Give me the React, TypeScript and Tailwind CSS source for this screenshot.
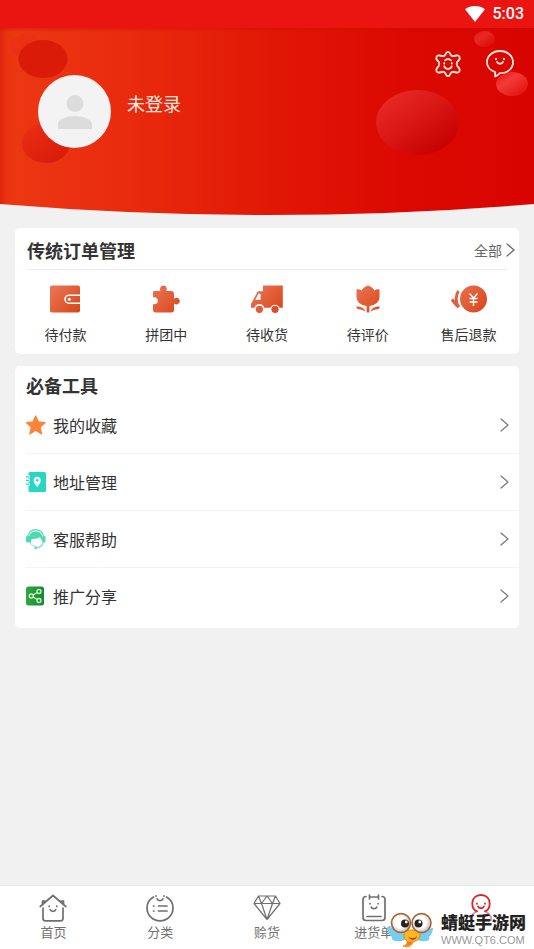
import type { ReactNode } from "react"

const stroke = {
  fill: "none",
  stroke: "currentColor",
  strokeLinecap: "round" as const,
  strokeLinejoin: "round" as const,
}

function ChevronIcon() {
  return (
    <svg width="9" height="14" viewBox="0 0 9 14" {...stroke} strokeWidth="1.2" aria-hidden="true">
      <path d="M1 1l7 6-7 6" />
    </svg>
  )
}

function GearIcon() {
  return (
    <svg width="28" height="28" viewBox="0 0 28 28" {...stroke} strokeWidth="1.8" aria-hidden="true">
      <path d="M14 1.800c1.300 0 1.800.8 2.200 2 .5 1.700 2 2.600 3.800 2.200l2.500-.5c1.600-.3 2.400.2 3 1.400.6 1.200.4 2.100-.6 3.100-1.700 1.700-2.200 2.600-2.200 4s.5 2.300 2.200 4c1 1 1.200 1.900.6 3.100-.6 1.200-1.400 1.700-3 1.400l-2.500-.5c-1.800-.4-3.300.5-3.800 2.200-.4 1.200-.9 2-2.200 2s-1.800-.8-2.200-2c-.5-1.700-2-2.600-3.800-2.200l-2.500.5c-1.600.3-2.400-.2-3-1.400-.6-1.200-.4-2.100.6-3.100 1.700-1.700 2.200-2.600 2.200-4s-.5-2.300-2.200-4c-1-1-1.200-1.900-.6-3.100.6-1.200 1.400-1.700 3-1.400l2.500.5c1.800.4 3.300-.5 3.800-2.200.4-1.200.9-2 2.200-2z" />
      <path d="M11 10.300c1.800-1.600 4.200-1.600 6 0M10.200 16.300c1.300 3.600 6.300 3.600 7.600 0" />
      <path d="M10.200 13.200v.2M17.800 13.200v.2" strokeWidth="2" />
    </svg>
  )
}

function MessageIcon() {
  return (
    <svg width="28" height="28" viewBox="0 0 28 28" {...stroke} strokeWidth="1.8" aria-hidden="true">
      <path d="M9.200 22.200v4.300c2.200-.8 3.400-2 4.600-3.300C21.500 23.300 27 18.600 27 12.300 27 5.900 21.300 1 14 1S1 5.900 1 12.300c0 4.300 3.200 8.300 8.200 9.900z" />
      <path d="M11 11.800c.8 2.600 5.200 2.600 6 0" />
      <path d="M10 8.800v.4M18 8.800v.4" strokeWidth="2" />
    </svg>
  )
}

function WifiIcon() {
  return (
    <svg width="20" height="16" viewBox="0 0 20 16" fill="currentColor" aria-hidden="true">
      <path d="M0 3.200C6-1 14-1 20 3.200L10 16z" />
    </svg>
  )
}

function BannerBackdrop() {
  return (
    <svg
      className="absolute inset-0 h-full w-full"
      viewBox="0 0 534 188"
      preserveAspectRatio="none"
      aria-hidden="true"
    >
      <defs>
        <linearGradient id="banner">
          <stop offset="0" stopColor="#e93011" />
          <stop offset="0.03" stopColor="#ec3712" />
          <stop offset="0.25" stopColor="#e92a0e" />
          <stop offset="0.5" stopColor="#e11806" />
          <stop offset="0.75" stopColor="#dc0902" />
          <stop offset="1" stopColor="#d80400" />
        </linearGradient>
        <linearGradient id="bigBall" x1="0.1" y1="0.1" x2="0.85" y2="0.9">
          <stop offset="0" stopColor="#e82a26" />
          <stop offset="0.45" stopColor="#da1816" />
          <stop offset="1" stopColor="#c60000" />
        </linearGradient>
        <linearGradient id="lightBall" x1="0" y1="0" x2="0.9" y2="1">
          <stop offset="0" stopColor="#e41414" />
          <stop offset="0.4" stopColor="#f33a38" />
          <stop offset="1" stopColor="#e01008" />
        </linearGradient>
        <linearGradient id="smallBall" x1="0" y1="0" x2="0.9" y2="1">
          <stop offset="0" stopColor="#e41a16" />
          <stop offset="0.4" stopColor="#e82824" />
          <stop offset="1" stopColor="#da0802" />
        </linearGradient>
        <linearGradient id="lowBall" x1="0" y1="0" x2="0.7" y2="1">
          <stop offset="0" stopColor="#ec3014" />
          <stop offset="1" stopColor="#d91c0a" />
        </linearGradient>
        <linearGradient id="topEdge" x2="0" y2="1">
          <stop offset="0" stopColor="#c80c00" stopOpacity="0.4" />
          <stop offset="1" stopColor="#c80c00" stopOpacity="0" />
        </linearGradient>
        <linearGradient id="leftEdge">
          <stop offset="0" stopColor="#d01400" stopOpacity="0.4" />
          <stop offset="1" stopColor="#d01400" stopOpacity="0" />
        </linearGradient>
      </defs>
      <path d="M0 0H534V176Q267 198 0 176z" fill="url(#banner)" />
      <rect width="534" height="4" fill="url(#topEdge)" />
      <rect width="6" height="176" fill="url(#leftEdge)" />
      <ellipse cx="26" cy="18" rx="15" ry="12" fill="#ec2c18" opacity="0.6" />
      <ellipse cx="43" cy="31" rx="24.500" ry="19" fill="#d91b08" />
      <ellipse cx="46" cy="115" rx="24" ry="20" fill="url(#lowBall)" />
      <ellipse cx="417.500" cy="94.500" rx="41.500" ry="32.500" fill="url(#bigBall)" />
      <ellipse cx="484.500" cy="11" rx="10.500" ry="8" fill="url(#smallBall)" />
      <ellipse cx="512" cy="56" rx="16" ry="12" fill="url(#lightBall)" />
    </svg>
  )
}

function OrderSvg({ id, width = 32, children }: { id: string; width?: number; children: ReactNode }) {
  return (
    <svg width={width} height="30" viewBox={`0 0 ${width} 30`} fill={`url(#${id})`} aria-hidden="true">
      <defs>
        <linearGradient id={id} x1="0" y1="0" x2={width} y2="30" gradientUnits="userSpaceOnUse">
          <stop offset="0.1" stopColor="#ea7454" />
          <stop offset="0.9" stopColor="#d9491c" />
        </linearGradient>
      </defs>
      {children}
    </svg>
  )
}

const orders = [
  {
    label: "待付款",
    icon: (
      <OrderSvg id="wallet">
        <rect x="1" y="1.500" width="30" height="27" rx="2" />
        <path d="M32 11.200H20a4 4 0 000 8h12" fill="none" stroke="#fff" strokeWidth="1.500" />
        <circle cx="20.300" cy="15.200" r="1.500" fill="#fff" />
      </OrderSvg>
    ),
  },
  {
    label: "拼团中",
    icon: (
      <OrderSvg id="puzzle">
        <path d="M4 7h6.500c-.8-1.200-.7-2.200-.2-3.200C11 2.300 12.200 1.500 13.500 1.500s2.500.8 3 2.300c.4 1 .3 2-.2 3.200H21c1.800 0 3 1 3 2.800v5c1-.8 1.800-1 2.600-1 1.800 0 3.200 1.400 3.200 3.200s-1.400 3.400-3.200 3.400c-.8 0-1.600-.2-2.600-1v6.600c0 1.600-.9 2.500-2.500 2.500h-16c-1.600 0-2.500-.9-2.500-2.500v-5.700c2.800.4 5-1 5-3.500s-2.200-4-5-3.600V9c0-1.200.6-2 1-2z" />
      </OrderSvg>
    ),
  },
  {
    label: "待收货",
    icon: (
      <OrderSvg id="truck">
        <path d="M12 1.500h19.800v22.200h-3.200a5 5 0 00-9.200 0h-6.200a5 5 0 00-9.600 0H0v-4l2.200-3.600L6 8.500c.4-.8 1-1.200 2-1.200h4z" />
        <path d="M4.300 15.800L7.300 9.700h2.400v6.100z" fill="#fff" />
        <circle cx="8.400" cy="25.300" r="3.600" />
        <circle cx="24" cy="25.300" r="3.600" />
      </OrderSvg>
    ),
  },
  {
    label: "待评价",
    icon: (
      <OrderSvg id="tulip">
        <path d="M4.500 5.600c1.200-.6 3.200-.4 5.200 1 .8-2 2.800-4.200 6.300-5.100 3.500.9 5.500 3.100 6.300 5.100 2-1.400 4-1.600 5.200-1v7.200c0 5-4 8.700-10.100 9.100v6.600h-2.800v-6.600c-6.100-.4-10.100-4.100-10.100-9.100z" />
        <path d="M4.300 22.400c5.200 0 8.200 1.600 9 5.400-1.400-1.800-4.200-2.400-6.800-2.600-1.400 0-2.200-1.400-2.200-2.800zM27.700 22.400c-5.200 0-8.200 1.600-9 5.400 1.400-1.800 4.200-2.400 6.800-2.600 1.400 0 2.200-1.400 2.200-2.800z" />
      </OrderSvg>
    ),
  },
  {
    label: "售后退款",
    icon: (
      <OrderSvg id="refund" width={38}>
        <circle cx="23.500" cy="15" r="13.500" />
        <path
          d="M19.500 9.500l4 4.500 4-4.500M23.500 14v8M19.500 14.500h8M19.500 18h8"
          fill="none"
          stroke="#fff"
          strokeWidth="1.400"
        />
        <path
          d="M8.500 7c-3.200 4.500-3.200 12 .4 16.200M1.800 15.500c1.600 1.400 2.800 3.700 6.400 7.300"
          fill="none"
          stroke="#de6040"
          strokeWidth="3"
        />
      </OrderSvg>
    ),
  },
]

const tools = [
  {
    label: "我的收藏",
    icon: (
      <svg width="20" height="20" viewBox="0 0 20 20" fill="#fc8338" aria-hidden="true">
        <path
          d="M9.700.9l2.700 6 6.700.6-5 4.500 1.500 6.900-5.900-3.600-5.900 3.600L5.300 12 .3 7.500 7 6.900z"
          stroke="#fc8338"
          strokeWidth="1.200"
          strokeLinejoin="round"
        />
      </svg>
    ),
  },
  {
    label: "地址管理",
    icon: (
      <svg width="20" height="20" viewBox="0 0 20 20" aria-hidden="true">
        <rect x="2.500" y="0" width="17.500" height="20" rx="1.500" fill="#28d7c3" />
        <path d="M0 4.800h4M0 8.300h4M0 12.200h4" stroke="#fff" strokeWidth="2.600" />
        <path d="M0 4.800h3.200M0 8.300h3.200M0 12.200h3.200" stroke="#28d7c3" strokeWidth="1.300" />
        <path d="M11.200 4.800c-2 0-3.500 1.500-3.500 3.500 0 2.600 2 4.800 3.500 7 1.500-2.200 3.500-4.400 3.500-7 0-2-1.500-3.500-3.500-3.500z" fill="#fff" />
        <circle cx="11.200" cy="8.300" r="1.300" fill="#28d7c3" />
      </svg>
    ),
  },
  {
    label: "客服帮助",
    icon: (
      <svg width="20" height="20" viewBox="0 0 20 20" aria-hidden="true">
        <path d="M1.700 9C1.700 4 5 .8 9.700.8S17.700 4 17.700 9" fill="none" stroke="#66dfc0" strokeWidth="1.400" />
        <path d="M2.800 12C2 5.500 5.500 2.400 9.700 2.400s7.700 3.100 6.900 9.600c-1.200-.9-2-2.200-2.600-4-2.500 1.800-6 2.300-8.200 1.800-.3 1.200-1.200 3.700-1 5.200-.9-.8-1.700-1.800-2-3z" fill="#4cd9b4" />
        <rect x="0" y="6.800" width="3.200" height="6.700" rx="1.500" fill="#4cd9b4" />
        <rect x="16.300" y="6.800" width="3.200" height="6.700" rx="1.500" fill="#4cd9b4" />
        <path d="M17.500 13c-1 3.500-4 5.800-7.500 6" fill="none" stroke="#66dfc0" strokeWidth="1.100" />
        <path d="M4.500 14.500c1.200 1.700 3 2.700 5.500 2.700" fill="none" stroke="#66dfc0" strokeWidth="0.800" />
        <circle cx="9.600" cy="18.700" r="1.200" fill="#4cd9b4" />
      </svg>
    ),
  },
  {
    label: "推广分享",
    icon: (
      <svg width="20" height="20" viewBox="0 0 20 20" aria-hidden="true">
        <defs>
          <linearGradient id="share">
            <stop offset="0" stopColor="#2fa83c" />
            <stop offset="1" stopColor="#128a35" />
          </linearGradient>
        </defs>
        <rect x="0" y="0.500" width="18" height="19" rx="2.500" fill="url(#share)" />
        <g fill="none" stroke="#d5f3d3" strokeWidth="1.300">
          <circle cx="5.300" cy="10" r="2" />
          <circle cx="13" cy="5.500" r="2" />
          <circle cx="13" cy="14.500" r="2" />
          <path d="M7.100 9l4.200-2.500M7.100 11l4.200 2.500" />
        </g>
      </svg>
    ),
  },
]

function TabSvg({ children }: { children: ReactNode }) {
  return (
    <svg width="28" height="28" viewBox="0 0 28 28" {...stroke} strokeWidth="1.700" aria-hidden="true">
      {children}
    </svg>
  )
}

const tabs = [
  {
    label: "首页",
    icon: (
      <TabSvg>
        <path d="M1.200 12.500L14 1.500l12.800 11M3.500 10V7.200h2.200M24.500 10V7.200h-2.200M4 14v10.500c0 1.500.8 2.300 2.300 2.300h15.400c1.500 0 2.300-.8 2.300-2.300V14" />
        <path d="M11.200 15.500c.8 2.400 4.800 2.400 5.600 0M10.200 12.200v.3M17.800 12.200v.3" />
      </TabSvg>
    ),
  },
  {
    label: "分类",
    icon: (
      <TabSvg>
        <path d="M7.500 3C3.500 5.200 1 9.300 1 14c0 7.200 5.800 12.800 13 12.800S27 21.200 27 14c0-4.700-2.500-8.800-6.500-11" />
        <path d="M11 4.800c.8 2.500 5.200 2.500 6 0M10 1.800v.3M18 1.800v.3M7.500 12h.5M7.500 17h.5M12.500 12h8.500M12.500 17h8.500" />
      </TabSvg>
    ),
  },
  {
    label: "赊货",
    icon: (
      <TabSvg>
        <path
          d="M5.500 2h17L27 9.500 14 25.500 1 9.500zM1 9.500h26M5.500 2l3 7.500L14 2l5.500 7.500 3-7.500M8.500 9.500l5.500 16 5.500-16"
          strokeWidth="1.200"
        />
      </TabSvg>
    ),
  },
  {
    label: "进货单",
    icon: (
      <TabSvg>
        <path d="M6 2.500c-2 0-3 1-3 3v18c0 2 1 3 3 3h16c2 0 3-1 3-3v-18c0-2-1-3-3-3" />
        <path d="M9.500 1v4M9.500 3h9M18.500 1v4M11.200 13c.8 2.300 4.800 2.300 5.600 0M10 9.500v.3M18 9.500v.3M7 22.500h14" />
      </TabSvg>
    ),
  },
]

function MineIcon() {
  return (
    <svg width="28" height="28" viewBox="0 0 28 28" {...stroke} strokeWidth="1.800" aria-hidden="true">
      <path d="M10 17.300C6.800 16.500 5.300 13.300 5.300 9.500 5.300 4.300 8.600 1 14 1s8.700 3.300 8.700 8.500c0 3.800-1.500 7-4.700 7.800" />
      <path d="M10 17.300C6.500 18.800 4 21 3.500 26M18 17.300c3.500 1.500 6 3.700 6.500 8.700" opacity="0.5" />
      <path d="M11 12.300c.8 2.600 5.200 2.600 6 0M10 9.500v.3M18 9.500v.3" />
    </svg>
  )
}

function DragonflyLogo() {
  return (
    <svg width="46" height="36" viewBox="0 0 46 36" aria-hidden="true">
      <defs>
        <radialGradient id="eye" cx="0.450" cy="0.450">
          <stop offset="0.600" stopColor="#fff" />
          <stop offset="1" stopColor="#c9c9c9" />
        </radialGradient>
      </defs>
      <path d="M0 15c5 0 14 3 20 10-2 4-7 5-10 4-4 0-6-2-5-4-3-2-5-6-5-10z" fill="#76cdf4" />
      <path d="M46 16c-5 0-12 3-17 9 1 4 6 5 9 4 4 0 5-2 4-4 2-2 4-5 4-9z" fill="#76cdf4" />
      <path d="M18 18h14c3 6 0 11-6 12-1 4-5 6-10 4 4 0 5-2 4-5-3-2-4-6-2-11z" fill="#fdb81e" stroke="#d87b10" strokeWidth="0.800" />
      <path d="M21 24c2 3 7 3 9 0-1 5-7 5-9 0z" fill="#a5331a" />
      <path d="M20 29c2 1 4 1 6 0-1 4-5 6-10 4 3 0 4-1 4-4z" fill="#f37e19" />
      <circle cx="14" cy="11" r="9.500" fill="url(#eye)" stroke="#a8612f" strokeWidth="1.600" />
      <circle cx="34.500" cy="11" r="9.500" fill="url(#eye)" stroke="#a8612f" strokeWidth="1.600" />
      <circle cx="18" cy="11.500" r="4" fill="#26221f" />
      <circle cx="31.500" cy="11.500" r="4" fill="#26221f" />
      <circle cx="19.300" cy="10" r="1.400" fill="#fff" />
      <circle cx="32.800" cy="10" r="1.400" fill="#fff" />
    </svg>
  )
}

export default function App() {
  return (
    <div className="flex min-h-screen flex-col bg-[#f1f1f1] font-['Noto_Sans_CJK_SC',sans-serif] text-[#333]">
      <div className="flex h-7 items-center justify-end gap-2 bg-[#ea1410] pr-2.5 text-white">
        <WifiIcon />
        <span className="font-[Roboto,sans-serif] text-base font-medium">5:03</span>
      </div>

      <header className="relative h-[188px] text-[#ffe9df]">
        <BannerBackdrop />
        <div className="relative flex items-start pt-[22px] pr-5 pl-[38px]">
          <div className="mt-[25px] flex size-[73px] items-center justify-center rounded-full bg-[#f3f3f3]">
            <svg width="36" height="36" viewBox="0 0 36 36" fill="#dcdcdc" aria-hidden="true">
              <circle cx="18" cy="9.500" r="8.500" />
              <path d="M1 35v-4.500c0-5 8.500-8.500 17-8.500s17 3.500 17 8.500V35z" />
            </svg>
          </div>
          <h1 className="mt-[39px] ml-4 text-lg leading-7">未登录</h1>
          <div className="ml-auto flex gap-6">
            <button type="button" aria-label="设置">
              <GearIcon />
            </button>
            <button type="button" aria-label="消息">
              <MessageIcon />
            </button>
          </div>
        </div>
      </header>

      <main className="flex flex-1 flex-col gap-3 px-[15px] pt-3">
        <section className="rounded-[5px] bg-white pb-2">
          <div className="mx-3 flex h-[42px] items-end justify-between border-b border-[#ebebeb] pb-[5px]">
            <h2 className="text-lg leading-7 font-bold">传统订单管理</h2>
            <a href="#orders" className="-mr-2 flex items-center gap-1 text-sm leading-7 text-[#666]">
              全部
              <ChevronIcon />
            </a>
          </div>
          <div className="grid grid-cols-5 pt-3.5">
            {orders.map((order) => (
              <button key={order.label} type="button" className="flex flex-col items-center gap-2 text-sm leading-6">
                {order.icon}
                {order.label}
              </button>
            ))}
          </div>
        </section>

        <section className="rounded-[5px] bg-white pb-1">
          <h2 className="px-[11px] pt-[5px] text-lg leading-7 font-bold">必备工具</h2>
          <ul className="-mt-0.5 divide-y divide-[#f3f3f3] pl-[11px]">
            {tools.map((tool) => (
              <li key={tool.label}>
                <a href="#tool" className="flex h-14 items-center pr-2.5 text-base">
                  {tool.icon}
                  <span className="ml-[7px]">{tool.label}</span>
                  <span className="ml-auto text-[#777]">
                    <ChevronIcon />
                  </span>
                </a>
              </li>
            ))}
          </ul>
        </section>
      </main>

      <nav className="relative grid h-16 grid-cols-5 border-t border-[#e8e8e8] bg-white pt-2 text-[13px] leading-5 text-[#707070]">
        {tabs.map((tab) => (
          <button key={tab.label} type="button" className="flex flex-col items-center">
            {tab.icon}
            {tab.label}
          </button>
        ))}
        <button type="button" aria-label="我的" className="flex flex-col items-center text-[#d9262b]">
          <MineIcon />
        </button>

        {/* site mark, sits over the last two tabs */}
        <div className="pointer-events-none absolute right-2 bottom-px flex items-center gap-2">
          <DragonflyLogo />
          <div className="flex flex-col">
            <span className="text-[17px] leading-5 font-black text-[#222]">蜻蜓手游网</span>
            <span className="font-['Liberation_Sans',sans-serif] text-[11px] leading-4 text-[#999]">WWW.QT6.COM</span>
          </div>
        </div>
      </nav>
    </div>
  )
}
